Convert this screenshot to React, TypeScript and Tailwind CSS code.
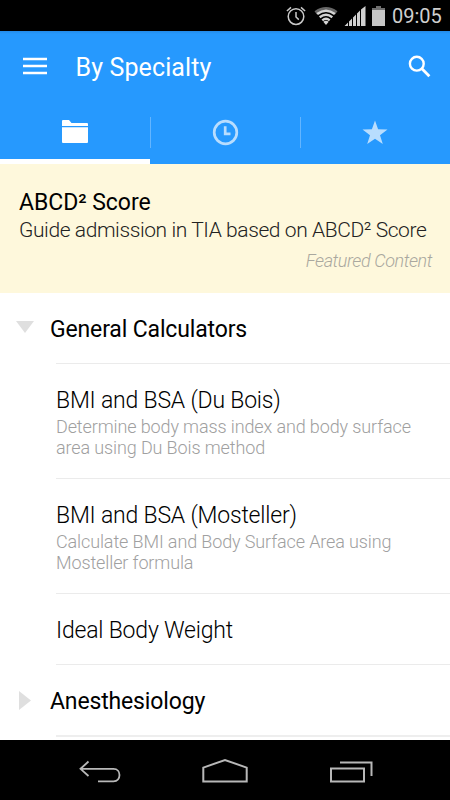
import React from 'react';

const AlarmIcon = () => (
  <svg className="ml-[286px] h-[20px] w-[20px] shrink-0" viewBox="0 0 20 20" fill="none" stroke="#c9c9c9" strokeWidth="1.5">
    <circle cx="10" cy="10.6" r="7.8" />
    <path d="M10 6v5l2.8 2.6M0.9 5 5 1.4M19.1 5 15 1.4" />
  </svg>
);

const WifiIcon = () => (
  <svg className="ml-[8px] h-[20px] w-[24px] shrink-0" viewBox="0 0 24 20" fill="none">
    <path d="M0.5 5.2Q12-3 23.5 5.2L21 8.6Q12 1.5 3 8.6Z" fill="#666" />
    <path d="M3.2 8Q12 1.5 20.8 8M5.7 11.2Q12 6.3 18.3 11.2M8.3 14.3Q12 11.2 15.7 14.3" stroke="#d5d5d5" strokeWidth="2.4" />
    <path d="M9.3 15.7Q12 13.6 14.7 15.7L12 19Z" fill="#d5d5d5" />
  </svg>
);

const SignalIcon = () => (
  <svg className="ml-[6px] h-[20px] w-[22px] shrink-0" viewBox="0 0 22 20" fill="#d0d0d0">
    <path d="M0.5 20 4 16.5V20ZM5 20V15.5L8 12.5V20ZM9 20V11.5L12 8.5V20ZM13 20V7.5L16 4.5V20ZM17 20V3.5L21.5 0V20Z" />
  </svg>
);

const BatteryIcon = () => (
  <svg className="ml-[6px] h-[20px] w-[13px] shrink-0" viewBox="0 0 13 20">
    <path d="M4 0h5v2h4v3H0V2h4Z" fill="#707070" />
    <path d="M0 4h13v16H0Z" fill="#c6c6c6" />
  </svg>
);

function StatusBar() {
  return (
    <div className="flex h-[31px] items-center bg-black">
      <AlarmIcon />
      <WifiIcon />
      <SignalIcon />
      <BatteryIcon />
      <span className="ml-[7px] pt-[2px] text-[20px] leading-[31px] text-[#cfcfcf]">09:05</span>
    </div>
  );
}

function Header() {
  return (
    <header className="h-[133px] bg-[#2699fe] bg-[linear-gradient(#238be8,#2699fe_3px)]">
      <div className="flex h-[73px] items-center pl-[23px] pr-[19px]">
        <svg className="mt-[-3px] h-[18px] w-[24px]" viewBox="0 0 24 18" stroke="#fff" strokeWidth="2.3">
          <path d="M0 2h24M0 9h24M0 16h24" />
        </svg>
        <h1 className="ml-[28.5px] pt-px text-[25px] leading-[30px] tracking-[0.12px] text-white">By Specialty</h1>
        <svg className="ml-auto mt-[-3px] h-[23px] w-[23px]" viewBox="0 0 23 23" fill="none" stroke="#fff" strokeWidth="2.4">
          <circle cx="8.8" cy="8.7" r="6.9" />
          <path d="m13.7 13.6 7.7 7.7" strokeWidth="2.8" />
        </svg>
      </div>
      <nav className="grid h-[60px] grid-cols-3">
        <div className="flex items-start justify-center border-b-[5px] border-white pt-[16px]">
          <svg className="h-[24px] w-[26px]" viewBox="0 0 26 24" fill="#fff">
            <path d="M0 1Q0 0 1 0H7L9.5 3H25Q26 3 26 4V6H0ZM0 7.2H26V22Q26 23 25 23H1Q0 23 0 22Z" />
          </svg>
        </div>
        <div className="relative flex items-start justify-center pt-[15px]">
          <span className="absolute left-0 top-[13px] h-[31px] w-px bg-[#63b5ff]" />
          <svg className="h-[27px] w-[27px]" viewBox="0 0 27 27" fill="none" stroke="#b8ddfe" strokeWidth="2.7">
            <circle cx="13.5" cy="13.5" r="11.3" />
            <path d="M13.2 7.2v7.7h5.3" />
          </svg>
        </div>
        <div className="relative flex items-start justify-center pt-[16px]">
          <span className="absolute left-0 top-[13px] h-[31px] w-px bg-[#63b5ff]" />
          <svg className="h-[25px] w-[26px]" viewBox="0 0 26 25" fill="#b8ddfe">
            <path d="m13 .5 3.1 8.8 9.4.2-7.5 5.7 2.8 8.9-7.8-5.3-7.8 5.3L8 15.2.5 9.5l9.4-.2Z" />
          </svg>
        </div>
      </nav>
    </header>
  );
}

function Featured() {
  return (
    <section className="h-[129px] bg-[#fef8dc] pl-[19px] pr-[18px] pt-[25px]">
      <h2 className="text-[23px] leading-[27px] tracking-[-0.05px] text-black">ABCD² Score</h2>
      <p className="whitespace-nowrap text-[21px] font-light leading-[28px] tracking-[-0.41px] text-[#222]">
        Guide admission in TIA based on ABCD² Score
      </p>
      <p className="mt-[5px] text-right text-[18px] font-light italic leading-[24px] tracking-[-0.4px] text-[#aaa89f]">
        Featured Content
      </p>
    </section>
  );
}

function Category({ title, open = false }: { title: string; open?: boolean }) {
  return (
    <div className="flex h-[70px] items-center">
      <svg className="ml-[16px] h-[19px] w-[19px]" viewBox="0 0 19 19" fill="#dfdfdf">
        {open ? <path d="M0 2H18L9 14Z" /> : <path d="M3 0 15 9.5 3 19Z" />}
      </svg>
      <h2 className="ml-[15px] pt-[4px] text-[23px] leading-[30px] tracking-[-0.15px] text-black">{title}</h2>
    </div>
  );
}

function Calculator({ title, lines }: { title: string; lines: string[] }) {
  return (
    <div className="ml-[56px] border-t border-[#ebebeb] pb-[18px] pt-[22px]">
      <h3 className="text-[23px] font-light leading-[30px] tracking-[-0.2px] text-black">{title}</h3>
      {lines.length > 0 && (
        <p className="pb-[2px] text-[18px] font-light leading-[21px] tracking-[-0.12px] text-[#a0a0a0]">
          {lines.map((line) => (
            <span key={line} className="block whitespace-nowrap">{line}</span>
          ))}
        </p>
      )}
    </div>
  );
}

function NavBar() {
  return (
    <div className="flex h-[60px] items-center bg-black">
      <svg className="ml-[78px] mt-[2px] h-[26px] w-[44px]" viewBox="78 758 44 26" fill="none" stroke="#b8b8b8" strokeWidth="1.8">
        <path d="M88.5 761.5 80.5 768.8 88.5 776M81 768.8H113.5C121.5 768.8 121.5 781.3 113.5 781.3H98" />
      </svg>
      <svg className="ml-[79px] mt-[2px] h-[28px] w-[48px]" viewBox="201 757 48 28" fill="none" stroke="#b8b8b8" strokeWidth="2">
        <path d="M203.3 767.6 225 760 246.7 767.6V781.4H203.3Z" />
      </svg>
      <svg className="ml-[80px] mt-[2px] h-[26px] w-[46px]" viewBox="329 758 46 26" fill="none" stroke="#b8b8b8" strokeWidth="2">
        <path d="M331 768.5H364V781.5H331ZM340 762.5H371.5V776" />
      </svg>
    </div>
  );
}

export default function App() {
  return (
    <div className="flex h-[800px] w-[450px] flex-col overflow-hidden bg-white font-['Roboto',sans-serif]">
      <StatusBar />
      <Header />
      <Featured />
      <main className="h-[447px] overflow-hidden">
        <Category title="General Calculators" open />
        <Calculator title="BMI and BSA (Du Bois)" lines={['Determine body mass index and body surface', 'area using Du Bois method']} />
        <Calculator title="BMI and BSA (Mosteller)" lines={['Calculate BMI and Body Surface Area using', 'Mosteller formula']} />
        <Calculator title="Ideal Body Weight" lines={[]} />
        <div className="ml-[56px] border-t border-[#ebebeb]" />
        <Category title="Anesthesiology" />
        <div className="ml-[56px] border-t-2 border-[#eeeeee]" />
      </main>
      <NavBar />
    </div>
  );
}
